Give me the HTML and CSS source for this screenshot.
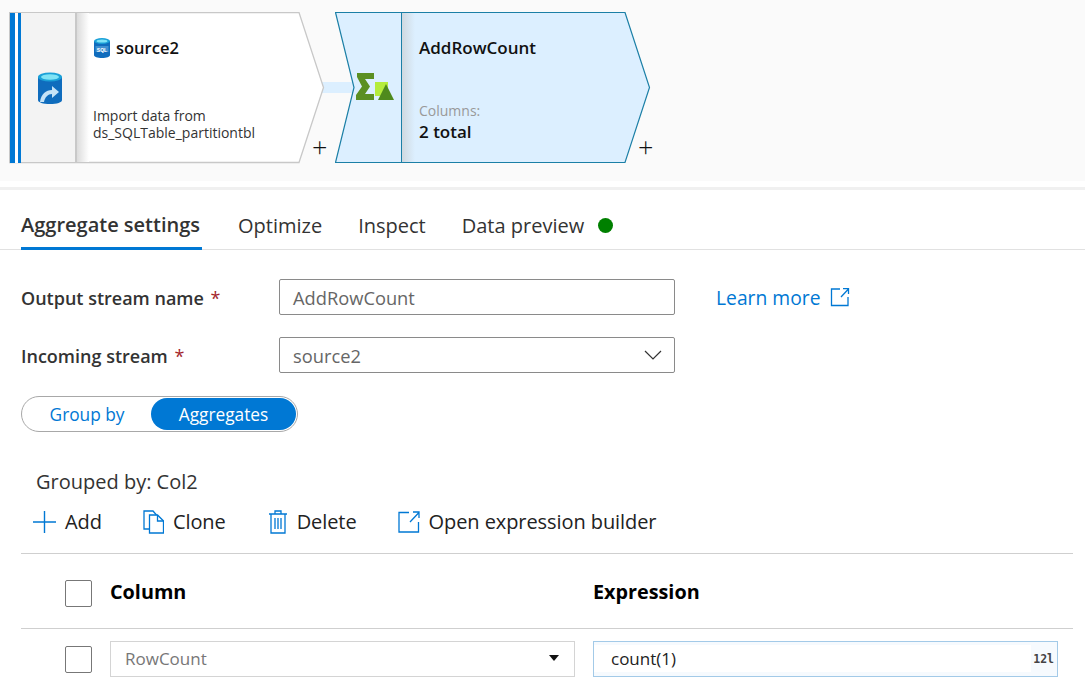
FILE: index.html
```html
<!DOCTYPE html>
<html lang="en">

<head>
    <meta charset="UTF-8">
    <title>Aggregate settings</title>
    <link rel="stylesheet" href="styles.css">
</head>

<body>
    <section class="canvas">
        <div class="link"></div>

        <div class="node node-source">
            <svg class="node-shape" width="316" height="152" viewBox="0 0 316 152">
                <defs>
                    <linearGradient id="shadeWhite">
                        <stop offset="0" stop-color="#dcdcdc" />
                        <stop offset="1" stop-color="#fff" />
                    </linearGradient>
                    <linearGradient id="shadeBlue">
                        <stop offset="0" stop-color="#cfd8df" />
                        <stop offset="1" stop-color="#dcefff" />
                    </linearGradient>
                </defs>
                <path d="M0.500 0.500H290L314.500 75.500L290 150.500H0.500Z" fill="#fff" stroke="#c8c8c8" stroke-width="1.300" />
                <rect x="1" y="1" width="5" height="150" fill="#0078d4" />
                <rect x="6" y="1" width="3" height="150" fill="#fff" />
                <rect x="9" y="1" width="3" height="150" fill="#0078d4" />
                <rect x="12" y="1" width="54" height="149" fill="#f3f3f3" />
                <rect x="66" y="1" width="2" height="149" fill="#c8c8c8" />
                <rect x="68" y="1" width="12" height="149" fill="url(#shadeWhite)" />
            </svg>
            <svg class="node-icon" width="26" height="32" viewBox="0 0 26 32">
                <path d="M1 5V28C1 30.500 6 32 13 32C20 32 25 30.500 25 28V5Z" fill="#0f6cbd" />
                <ellipse cx="13" cy="5" rx="12" ry="4.500" fill="#1ba1d8" />
                <ellipse cx="13" cy="5" rx="9" ry="2.800" fill="#7fe3f5" />
                <path d="M3 30C4 22 9 18 15 18V14L22 20L15 26V22C11 22 8 25 7 30Z" fill="#c5e3f7" />
            </svg>
            <div class="node-body">
                <h3 class="node-title"><svg class="sql-icon" width="16" height="20" viewBox="0 0 16 20">
                        <path d="M0 3V17C0 18.800 3.500 20 8 20C12.500 20 16 18.800 16 17V3Z" fill="#0f6cbd" />
                        <ellipse cx="8" cy="3" rx="8" ry="3" fill="#1ba1d8" />
                        <ellipse cx="8" cy="3" rx="5.500" ry="1.600" fill="#7fe3f5" />
                        <rect x="1.500" y="8" width="13" height="6" fill="#3f8fd0" />
                        <text x="8" y="13.500" class="sql-text">SQL</text>
                    </svg>source2</h3>
                <p class="node-text">Import data from<br>ds_SQLTable_partitiontbl</p>
            </div>
        </div>
        <span class="plus plus-source">+</span>

        <div class="node node-aggregate">
            <svg class="node-shape" width="316" height="152" viewBox="0 0 316 152">
                <path d="M0.500 0.500H290L314.500 75.500L290 150.500H0.500L19 75.500Z" fill="#dcefff" stroke="#1b7fa6" stroke-width="1.200" />
                <rect x="66" y="1" width="1" height="149" fill="#1b7fa6" />
                <rect x="67" y="1" width="13" height="149" fill="url(#shadeBlue)" />
            </svg>
            <svg class="node-icon" width="40" height="28" viewBox="0 0 40 28">
                <path d="M1 0H18V6H9L14 13.500L9 21H18V27H0V22L6 13.500L1 4Z" fill="#5b8f22" />
                <rect x="19" y="9" width="13" height="14" fill="#b5ec3c" />
                <path d="M30 11L38 27H22Z" fill="#4f8a1d" />
            </svg>
            <div class="node-body">
                <h3 class="node-title">AddRowCount</h3>
                <p class="node-label">Columns:</p>
                <p class="node-total">2 total</p>
            </div>
        </div>
        <span class="plus plus-aggregate">+</span>
    </section>

    <div class="divider"></div>

    <nav class="tabs">
        <a class="tab tab-active">Aggregate settings</a>
        <a class="tab">Optimize</a>
        <a class="tab">Inspect</a>
        <a class="tab">Data preview <i class="dot"></i></a>
    </nav>

    <section class="panel">
        <div class="form-row">
            <label class="form-label">Output stream name <b>*</b></label>
            <div class="field">AddRowCount</div>
            <a class="learn">Learn more
                <svg width="20" height="20" viewBox="0 0 20 20" fill="none" stroke="#0078d4" stroke-width="1.300">
                    <path d="M10 2H1.500V18.500H18V10" />
                    <path d="M11 10L18 2.500M13 1.700H18.500V7" />
                </svg>
            </a>
        </div>
        <div class="form-row">
            <label class="form-label">Incoming stream <b>*</b></label>
            <div class="field field-select">source2
                <svg width="18" height="10" viewBox="0 0 18 10" fill="none" stroke="#333" stroke-width="1.200">
                    <path d="M1 1L9 9L17 1" />
                </svg>
            </div>
        </div>

        <div class="toggle">
            <span class="toggle-item">Group by</span>
            <span class="toggle-item toggle-on">Aggregates</span>
        </div>

        <p class="grouped">Grouped by: Col2</p>

        <div class="toolbar">
            <span class="tool">
                <svg width="23" height="24" viewBox="0 0 23 24" stroke="#0078d4" stroke-width="1.400">
                    <path d="M11.500 1V23M0 12H23" />
                </svg>Add</span>
            <span class="tool">
                <svg width="21" height="24" viewBox="0 0 21 24" fill="none" stroke="#0078d4" stroke-width="1.300">
                    <path d="M6.500 19H1V1H10L13.500 5" />
                    <path d="M6.500 5H14.500L20.500 11V23H6.500Z" />
                    <path d="M14.500 5V11H20.500" />
                </svg>Clone</span>
            <span class="tool">
                <svg width="21" height="24" viewBox="-1 0 21 24" fill="none" stroke="#0078d4" stroke-width="1.300">
                    <path d="M1 4H19M7 4V1H13V4M3 4V23H17V4" />
                    <path d="M7 8V19M10 8V19M13 8V19" />
                </svg>Delete</span>
            <span class="tool">
                <svg width="22" height="22" viewBox="0 0 22 22" fill="none" stroke="#0078d4" stroke-width="1.300">
                    <path d="M11 1.500H1V21H20.500V11" />
                    <path d="M12 11L20.500 2M15 1H21V7" />
                </svg>Open expression builder</span>
        </div>

        <div class="grid-row grid-head">
            <i class="check check-head"></i>
            <div class="col-name">Column</div>
            <div class="col-expr">Expression</div>
        </div>
        <div class="grid-row grid-item">
            <i class="check"></i>
            <div class="col-name cell-select">RowCount<i class="caret"></i></div>
            <div class="col-expr cell-expr">
                <span class="expr-text">count(1)</span>
                <span class="expr-type">12l</span>
            </div>
        </div>
    </section>
</body>

</html>
```

FILE: styles.css
```css
* {
    margin: 0;
    padding: 0;
    box-sizing: border-box;
}

html,
body {
    width: 1085px;
    height: 685px;
    overflow: hidden;
    background: #fff;
    color: #222;
    font-family: "Open Sans", "Noto Sans", "Liberation Sans", sans-serif;
}

/* diagram canvas, nodes are free placed */
.canvas {
    position: relative;
    height: 181px;
    background: #fafafa;
}

.link {
    position: absolute;
    left: 322px;
    top: 82px;
    width: 34px;
    height: 11px;
    background: #dcefff;
}

.node {
    position: absolute;
    top: 12px;
    width: 316px;
    height: 152px;
}

.node-source {
    left: 9px;
}

.node-aggregate {
    left: 335px;
}

.node-shape {
    position: absolute;
    left: 0;
    top: 0;
}

.node-source .node-icon {
    position: absolute;
    left: 28px;
    top: 60px;
}

.node-aggregate .node-icon {
    position: absolute;
    left: 21px;
    top: 61px;
}

.node-body {
    position: absolute;
    top: 0;
    left: 84px;
    right: 30px;
    bottom: 0;
}

.node-source .node-body {
    left: 85px;
}

.node-title {
    position: absolute;
    top: 25px;
    left: 0;
    display: flex;
    align-items: center;
    gap: 6px;
    font-size: 17px;
    line-height: 22px;
    font-weight: 600;
    color: #111;
}

.node-source .node-title {
    font-size: 16.500px;
}

.sql-text {
    font-family: "Liberation Sans", sans-serif;
    font-size: 5px;
    font-weight: 700;
    fill: #fff;
    text-anchor: middle;
}

.node-text {
    position: absolute;
    top: 95px;
    left: -1px;
    font-size: 14px;
    line-height: 17px;
    color: #333;
    white-space: nowrap;
}

.node-label {
    position: absolute;
    top: 89px;
    left: 0;
    font-size: 14px;
    line-height: 20px;
    color: #999;
}

.node-total {
    position: absolute;
    top: 109px;
    left: 0;
    font-size: 17px;
    line-height: 22px;
    font-weight: 600;
    color: #111;
}

.plus {
    position: absolute;
    top: 129px;
    font-size: 27px;
    line-height: 36px;
    font-weight: 300;
    color: #111;
}

.plus-source {
    left: 312px;
}

.plus-aggregate {
    left: 638px;
}

.divider {
    height: 9px;
    border-bottom: 3px solid #f0f0f0;
}

/* tabs */
.tabs {
    display: flex;
    gap: 36px;
    height: 60px;
    padding-left: 21px;
    border-bottom: 1px solid #e1e1e1;
    font-size: 20px;
}

.tab {
    display: flex;
    align-items: center;
    height: 60px;
    padding-top: 12px;
    padding-bottom: 2px;
    color: #333;
}

.tab-active {
    width: 181px;
    padding-bottom: 0;
    border-bottom: 3px solid #0078d4;
    font-weight: 600;
    white-space: nowrap;
}

.dot {
    width: 15px;
    height: 15px;
    margin-left: 14px;
    border-radius: 50%;
    background: #008000;
}

/* form */
.panel {
    padding: 29px 12px 0 21px;
    font-size: 18px;
}

.form-row {
    display: flex;
    align-items: center;
    height: 36px;
    margin-bottom: 22px;
}

.form-label {
    width: 258px;
    padding-top: 2px;
    font-weight: 600;
    color: #333;
}

.form-label b {
    margin-left: 2px;
    font-weight: 400;
    color: #a4262c;
}

.field {
    display: flex;
    align-items: center;
    justify-content: space-between;
    width: 396px;
    height: 36px;
    padding: 1px 12px 0 13px;
    border: 1px solid #8a8a8a;
    border-radius: 2px;
    font-size: 18.300px;
    color: #666;
}

.field-select {
    padding-top: 0;
}

.learn {
    display: flex;
    align-items: center;
    gap: 10px;
    margin-left: 41px;
    font-size: 19.300px;
    color: #0078d4;
}

.toggle {
    display: flex;
    width: 277px;
    height: 36px;
    margin-top: 23px;
    padding: 1px;
    border: 1px solid #a8a8a8;
    border-radius: 18px;
    font-size: 17.300px;
}

.toggle-item {
    display: flex;
    align-items: center;
    justify-content: center;
    width: 129px;
    color: #0078d4;
}

.toggle-on {
    width: 146px;
    border-radius: 17px;
    background: #0078d4;
    color: #fff;
}

.grouped {
    margin-top: 37px;
    padding-left: 15px;
    font-size: 20px;
    line-height: 26px;
    color: #333;
}

.toolbar {
    display: flex;
    align-items: center;
    gap: 41px;
    height: 31px;
    margin-top: 11px;
    margin-bottom: 16px;
    padding-left: 12px;
    font-size: 20px;
    letter-spacing: -0.080px;
    color: #222;
}

.tool {
    display: flex;
    align-items: center;
    gap: 9px;
}

.grid-row {
    display: flex;
    align-items: center;
}

.grid-head {
    height: 76px;
    border-top: 1px solid #cfcfcf;
    border-bottom: 1px solid #cfcfcf;
    font-size: 19.800px;
    font-weight: 700;
    color: #000;
}

.grid-item {
    height: 36px;
    margin-top: 12px;
}

.check {
    width: 27px;
    height: 27px;
    margin-left: 44px;
    margin-right: 18px;
    border: 1px solid #777;
    border-radius: 2px;
}

.check-head {
    margin-top: 4px;
}

.col-name {
    width: 465px;
    margin-right: 18px;
}

.col-expr {
    width: 465px;
}

.cell-select {
    display: flex;
    align-items: center;
    justify-content: space-between;
    height: 36px;
    padding: 0 15px 2px 14px;
    border: 1px solid #d4d4d4;
    font-size: 17px;
    font-weight: 400;
    color: #777;
}

.caret {
    width: 0;
    height: 0;
    border-left: 5.500px solid transparent;
    border-right: 5.500px solid transparent;
    border-top: 6px solid #111;
}

.cell-expr {
    display: flex;
    align-items: center;
    justify-content: space-between;
    height: 36px;
    padding: 3px 3px 4px 0;
    border: 1px solid #a3cae8;
    background: #f6fafe;
    font-size: 17px;
}

.expr-text {
    display: flex;
    align-items: center;
    width: 437px;
    height: 100%;
    padding-left: 17px;
    background: #fff;
    color: #222;
}

.expr-type {
    font-family: "DejaVu Sans Mono", monospace;
    font-size: 11.500px;
    font-weight: 700;
    color: #444;
}
```
